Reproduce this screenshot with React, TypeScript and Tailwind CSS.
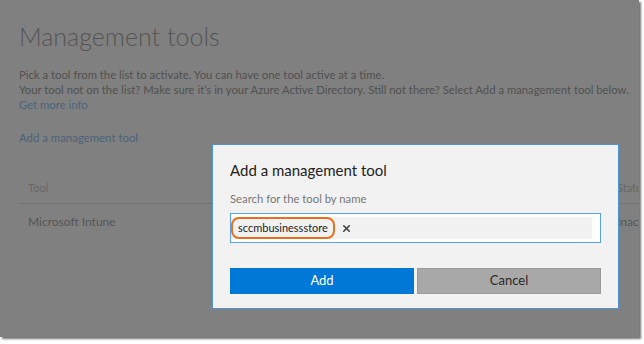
import { X } from "lucide-react";

export default function App() {
  return (
    <div className="w-[644px] h-[344px] bg-white font-['Lato','Liberation_Sans',sans-serif]">
      <div className="relative w-[639px] h-[337px] bg-[#808080] overflow-hidden shadow-[2px_2px_2px_rgba(0,0,0,0.55)]">
        {/* dimmed page behind the dialog */}
        <div className="pl-[19px] pt-[18px]">
          <h1 className="text-[25px] leading-[36px] font-light text-[#545454]">Management tools</h1>
          <div className="mt-[13px] text-[11.3px] leading-[15px] text-[#505050] whitespace-nowrap">
            <p>Pick a tool from the list to activate. You can have one tool active at a time.</p>
            <p>Your tool not on the list? Make sure it’s in your Azure Active Directory. Still not there? Select Add a management tool below.</p>
            <p className="text-[#4a637a]">Get more info</p>
          </div>
          <p className="mt-[18px] text-[11.4px] leading-[15px] text-[#4a637a]">Add a management tool</p>

          <div className="mt-[35px] w-[700px]">
            <div className="flex border-b border-[#737373] pb-[8px] text-[11px] leading-[15px] text-[#666666]">
              <span className="pl-[9px] w-[598px]">Tool</span>
              <span>Status</span>
            </div>
            <div className="flex pt-[9px] text-[12px] leading-[18px] text-[#555555]">
              <span className="pl-[9px] w-[598px]">Microsoft Intune</span>
              <span>Inactive</span>
            </div>
          </div>
        </div>

        {/* modal */}
        <div className="absolute left-[212px] top-[144px] w-[407px] h-[165px] bg-[#f2f2f2] border border-[#4b95dc] px-[17px] pt-[14px]">
          <h2 className="text-[15px] leading-[22px] text-[#222222]">Add a management tool</h2>
          <p className="mt-[10px] text-[11.3px] leading-[16px] text-[#777777]">Search for the tool by name</p>
          <div className="mt-[6px] h-[30px] bg-white border border-[#5aa3e3] pt-[3px] pb-[3px] pr-[8px]">
            <div className="h-full bg-[#f1f1f1] flex items-center">
              <span className="px-[5px] h-[22px] flex items-center rounded-[8px] border-2 border-[#e8701e] text-[11px] text-[#222222]">
                sccmbusinessstore
              </span>
              <X className="ml-[6px] w-[11px] h-[11px] text-[#444444]" strokeWidth={3.5} />
            </div>
          </div>
          <div className="mt-[25px] flex gap-[3px]">
            <button className="w-[184px] h-[26px] bg-[#0078d7] text-white text-[13px]">Add</button>
            <button className="w-[184px] h-[26px] bg-[#a8a8a8] border border-[#9a9a9a] text-[#2a2a2a] text-[13px]">Cancel</button>
          </div>
        </div>
      </div>
    </div>
  );
}
